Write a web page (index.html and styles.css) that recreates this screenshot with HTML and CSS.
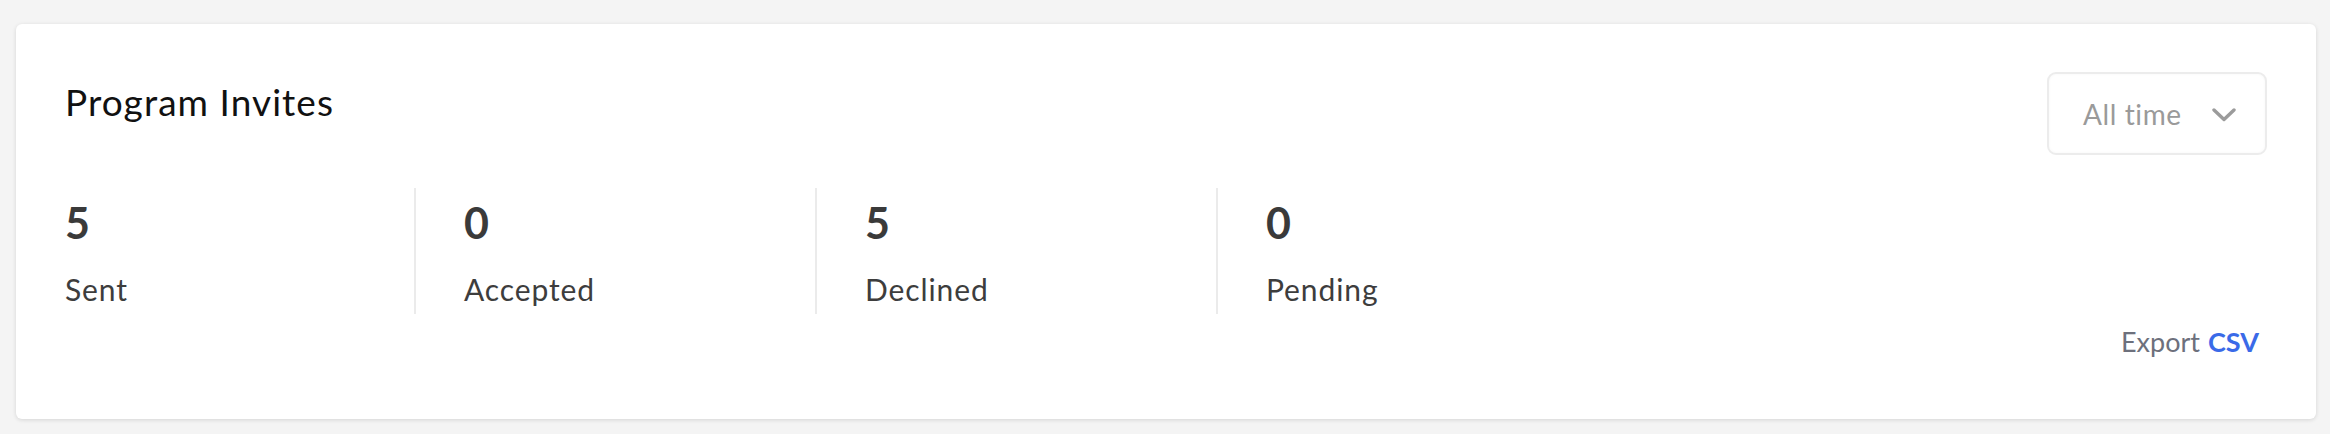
FILE: index.html
```html
<!DOCTYPE html>
<html lang="en">
<head>
<meta charset="utf-8">
<title>Program Invites</title>
<link rel="stylesheet" href="styles.css">
</head>
<body>
<main class="page">
  <section class="card">
    <header class="card-header">
      <h1 class="title">Program Invites</h1>
      <button class="select" type="button">
        <span class="select-label">All time</span>
        <svg class="chevron" width="24" height="14" viewBox="0 0 24 14" aria-hidden="true">
          <path d="M2 2 L12 11.5 L22 2" fill="none" stroke="#9b9b9b" stroke-width="3.4" stroke-linecap="round" stroke-linejoin="round"/>
        </svg>
      </button>
    </header>
    <div class="stats">
      <div class="stat">
        <div class="stat-value">5</div>
        <div class="stat-label">Sent</div>
      </div>
      <div class="stat">
        <div class="stat-value">0</div>
        <div class="stat-label">Accepted</div>
      </div>
      <div class="stat">
        <div class="stat-value">5</div>
        <div class="stat-label">Declined</div>
      </div>
      <div class="stat">
        <div class="stat-value">0</div>
        <div class="stat-label">Pending</div>
      </div>
    </div>
    <div class="export">
      <span class="export-text">Export</span>
      <a class="export-link" href="#">CSV</a>
    </div>
  </section>
</main>
</body>
</html>
```
FILE: styles.css
```css
* {
  box-sizing: border-box;
}

html, body {
  margin: 0;
  padding: 0;
  background: #f4f4f4;
}

body {
  font-family: "Lato", "Liberation Sans", sans-serif;
}

.page {
  padding: 24px 14px 15px 16px;
}

.card {
  width: 2300px;
  height: 395px;
  background: #ffffff;
  border-radius: 6px;
  box-shadow: 0 1px 4px rgba(0, 0, 0, 0.13);
  padding: 48px 49px 0 49px;
}

.card-header {
  display: flex;
  justify-content: space-between;
  align-items: flex-start;
  height: 83px;
}

.title {
  margin: 8px 0 0 0;
  font-size: 37px;
  line-height: 44px;
  font-weight: 400;
  letter-spacing: 1.05px;
  color: #111111;
}

.select {
  width: 220px;
  height: 83px;
  display: flex;
  align-items: center;
  justify-content: space-between;
  padding: 0 29px 0 34px;
  background: #ffffff;
  border: 2px solid #ececec;
  border-radius: 9px;
  box-shadow: inset 0 0 3px rgba(0, 0, 0, 0.04);
  font-family: inherit;
  cursor: pointer;
}

.select-label {
  font-size: 28px;
  line-height: 34px;
  letter-spacing: 0.6px;
  color: #9a9a9a;
}

.chevron {
  display: block;
  margin-top: 2px;
}

.stats {
  display: flex;
  margin-top: 33px;
  height: 126px;
}

.stat {
  width: 349px;
  padding-top: 13px;
}

.stat + .stat {
  width: 401px;
  padding-left: 48px;
  border-left: 2px solid #ebebeb;
}

.stat-value {
  font-size: 43px;
  line-height: 44px;
  font-weight: 700;
  color: #3a3a3a;
}

.stat-label {
  margin-top: 26px;
  font-size: 30px;
  line-height: 36px;
  letter-spacing: 0.9px;
  color: #3d3d3d;
}

.export {
  display: flex;
  justify-content: flex-end;
  gap: 8px;
  margin-top: 12px;
  margin-right: 8px;
  font-size: 27px;
  line-height: 32px;
}

.export-text {
  color: #6d707c;
}

.export-link {
  color: #3a6ae8;
  font-weight: 700;
  text-decoration: none;
}
```
